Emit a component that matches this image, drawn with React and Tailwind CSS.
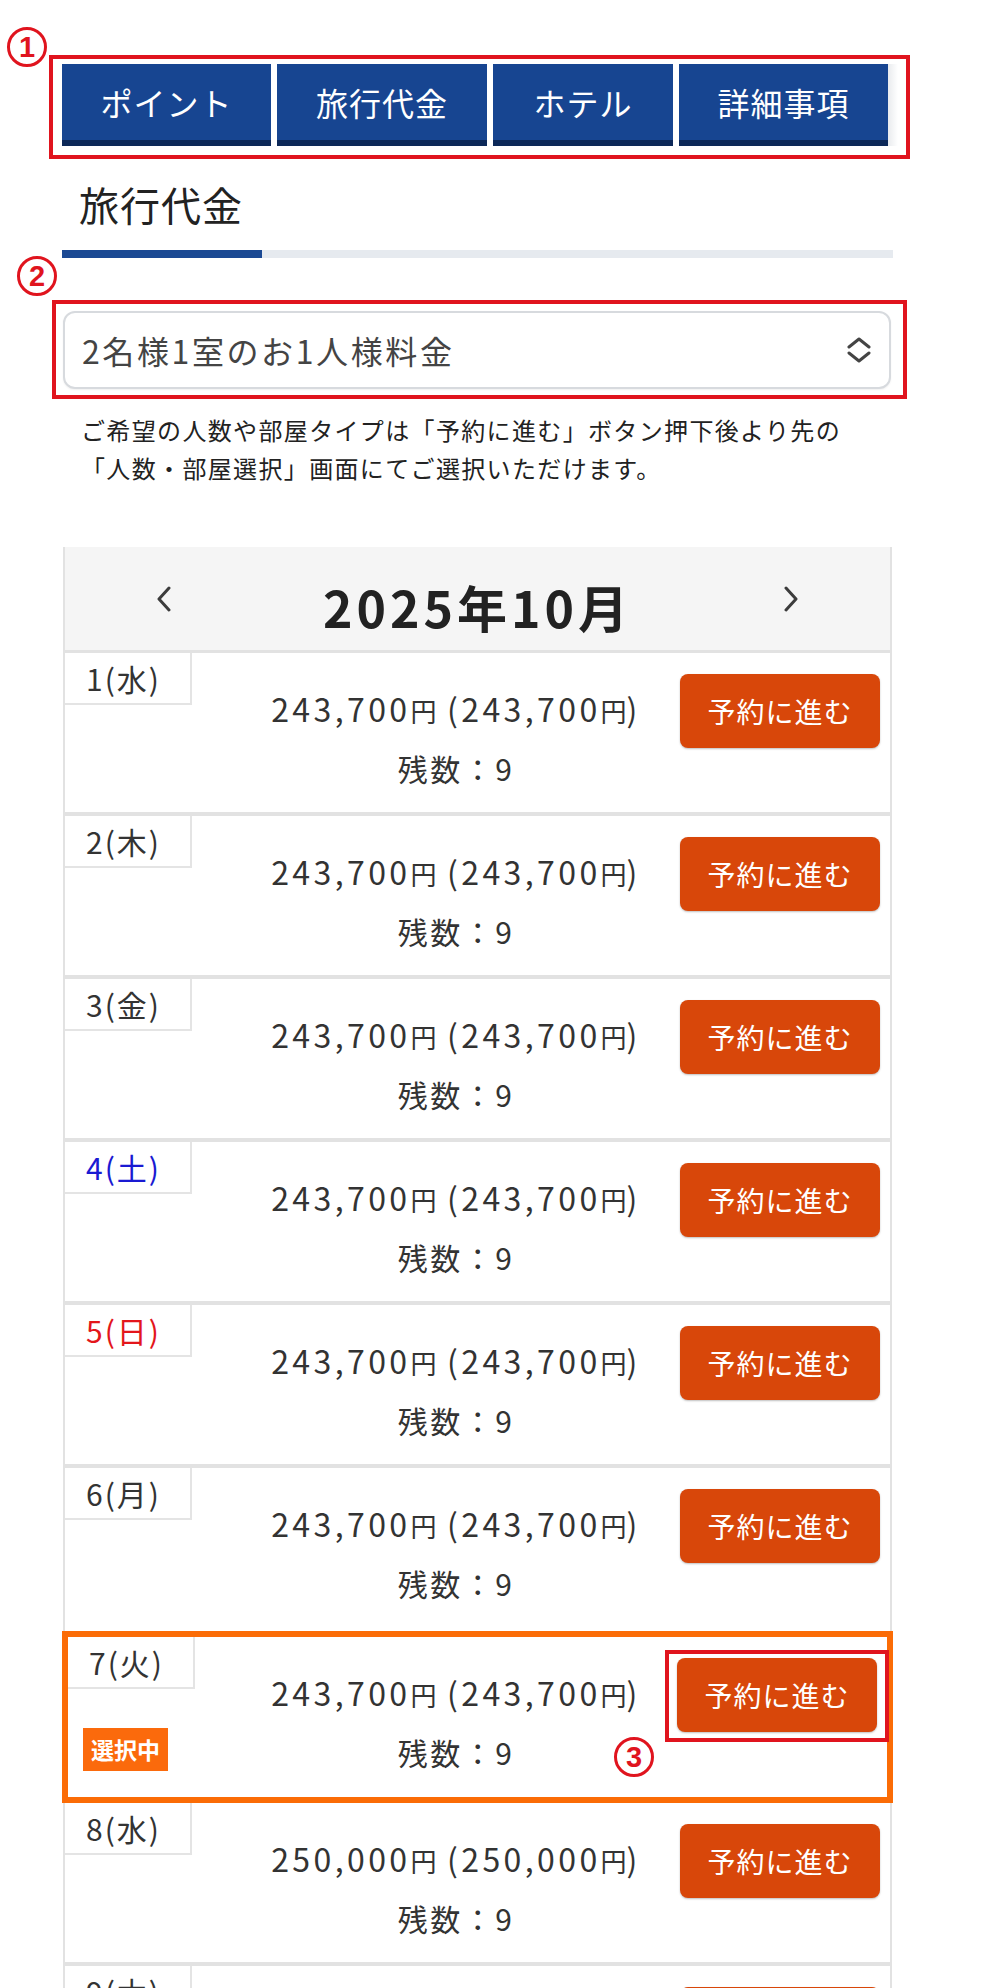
import { Fragment } from "react";

const tabs = [
  { label: "ポイント", w: "w-[209px]" },
  { label: "旅行代金", w: "w-[210px]" },
  { label: "ホテル", w: "w-[180px]" },
  { label: "詳細事項", w: "w-[209px]" },
];

const days = [
  { d: 1, w: "水", price: "243,700" },
  { d: 2, w: "木", price: "243,700" },
  { d: 3, w: "金", price: "243,700" },
  { d: 4, w: "土", price: "243,700", color: "text-[#1a1ad2]" },
  { d: 5, w: "日", price: "243,700", color: "text-[#e3161b]" },
  { d: 6, w: "月", price: "243,700" },
  { d: 7, w: "火", price: "243,700", selected: true },
  { d: 8, w: "水", price: "250,000" },
  { d: 9, w: "木", price: "250,000" },
];

function Marker({ n, className }) {
  return (
    <div
      className={`absolute flex h-[40px] w-[40px] items-center justify-center rounded-full border-[3px] border-[#e0141e] font-['Liberation_Sans',sans-serif] text-[29px] font-bold leading-none text-[#e0141e] ${className}`}
    >
      {n}
    </div>
  );
}

function Chevron({ dir }) {
  return (
    <svg width="16" height="26" viewBox="0 0 16 26" fill="none">
      <polyline
        points={dir === "left" ? "13,2 3,13 13,24" : "3,2 13,13 3,24"}
        stroke="#3c3c3c"
        strokeWidth="3"
        strokeLinecap="round"
        strokeLinejoin="round"
      />
    </svg>
  );
}

function Price({ value }) {
  return (
    <p className="text-[32px] leading-[40px] tracking-[3.4px] text-[#333]">
      {value}
      <span className="text-[26px] tracking-normal">円</span> ({value}
      <span className="text-[26px] tracking-normal">円</span>)
    </p>
  );
}

function DayRow({ day, last }) {
  const sel = day.selected;
  return (
    <div
      className={
        sel
          ? "relative -mx-[1px] flex h-[172px] border-[6px] border-[#fb6c06]"
          : `flex h-[163px] border-x-2 border-[#e2e2e2] ${last ? "" : "border-b-4"}`
      }
    >
      <div className="w-[127px] shrink-0">
        <div
          className={`flex h-[52px] w-[127px] items-center border-r-2 border-b-2 border-[#e4e4e4] pl-[21px] text-[30px] tracking-[2px] ${day.color || "text-[#333]"}`}
        >
          {day.d}({day.w})
        </div>
        {sel && (
          <div className="mt-[39px] ml-[15px] flex h-[43px] w-[85px] items-center justify-center bg-[#fb6a0c] text-[23px] font-bold text-white">
            選択中
          </div>
        )}
      </div>
      <div className="flex flex-1 flex-col items-center pl-[40px]">
        <div className="mt-[35px]">
          <Price value={day.price} />
        </div>
        <p className="mt-[17px] text-[30px] leading-[40px] tracking-[2.5px] text-[#333]">
          残数：9
        </p>
      </div>
      <div className="relative mt-[21px] mr-[10px] h-[74px] w-[200px] shrink-0">
        <button
          type="button"
          className="h-[74px] w-[200px] rounded-[8px] bg-[#d8470a] text-[28px] tracking-[1px] text-white shadow-[0_1px_2px_rgba(0,0,0,0.25)]"
        >
          予約に進む
        </button>
        {sel && (
          <div className="absolute -inset-x-[12px] -top-[8px] -bottom-[10px] border-4 border-[#e0141e]" />
        )}
      </div>
      {sel && <Marker n="3" className="left-[546px] top-[100px]" />}
    </div>
  );
}

export default function App() {
  const selIndex = days.findIndex((d) => d.selected);
  return (
    <div className="relative h-[1988px] w-[984px] overflow-hidden bg-white font-['Noto_Sans_CJK_JP',sans-serif] text-[#222]">
      <Marker n="1" className="left-[7px] top-[27px]" />
      <Marker n="2" className="left-[17px] top-[256px]" />

      <div className="pt-[55px]">
        {/* tab menu */}
        <div className="ml-[49px] h-[104px] w-[861px] border-4 border-[#e0141e] bg-white pt-[5px] pl-[9px]">
          <div className="flex gap-[6px]">
            {tabs.map((t) => (
              <div
                key={t.label}
                className={`${t.w} flex h-[82px] items-center justify-center border-b-[6px] border-[#0c2858] bg-[#174591] text-[32px] tracking-[1px] text-white`}
              >
                {t.label}
              </div>
            ))}
            <div className="-ml-[6px] h-[82px] w-[10px] bg-gradient-to-r from-[#e9ebee] to-white" />
          </div>
        </div>

        {/* heading */}
        <div className="mt-[15px] ml-[62px] w-[831px]">
          <h2 className="pl-[17px] text-[40px] leading-[60px] font-normal tracking-[1px] text-[#222]">
            旅行代金
          </h2>
          <div className="mt-[16px] flex h-[8px] bg-[#e6eaef]">
            <div className="w-[200px] bg-[#1b4993]" />
          </div>
        </div>

        {/* select */}
        <div className="mt-[42px] ml-[52px] h-[99px] w-[855px] border-4 border-[#e0141e] pt-[7px] pl-[7px]">
          <div className="flex h-[78px] w-[828px] items-center justify-between rounded-[12px] border-2 border-[#d7dade] bg-white pr-[18px] pl-[17px] shadow-[0_1px_2px_rgba(0,0,0,0.06)]">
            <span className="text-[32px] tracking-[2.6px] text-[#444]">
              2名様1室のお1人様料金
            </span>
            <svg width="24" height="26" viewBox="0 0 24 26" fill="none">
              <polyline points="2,10 12,2 22,10" stroke="#444" strokeWidth="3" strokeLinecap="round" strokeLinejoin="round" />
              <polyline points="2,16 12,24 22,16" stroke="#444" strokeWidth="3" strokeLinecap="round" strokeLinejoin="round" />
            </svg>
          </div>
        </div>

        <p className="mt-[12px] pl-[81px] text-[24px] leading-[38px] tracking-[1.35px] text-[#222]">
          ご希望の人数や部屋タイプは「予約に進む」ボタン押下後より先の
          <br />
          「人数・部屋選択」画面にてご選択いただけます。
        </p>

        {/* calendar */}
        <div className="mt-[60px] ml-[63px] w-[829px]">
          <div className="flex h-[106px] items-center justify-between border-x-2 border-b-[3px] border-[#e2e2e2] bg-[#f5f5f5] px-[91px]">
            <Chevron dir="left" />
            <h3 className="pt-[14px] text-[50px] leading-[60px] font-bold tracking-[4px] text-[#222]">
              2025年10月
            </h3>
            <Chevron dir="right" />
          </div>
          {days.map((day, i) => (
            <Fragment key={day.d}>
              <DayRow day={day} last={i === selIndex - 1} />
            </Fragment>
          ))}
        </div>
      </div>
    </div>
  );
}
